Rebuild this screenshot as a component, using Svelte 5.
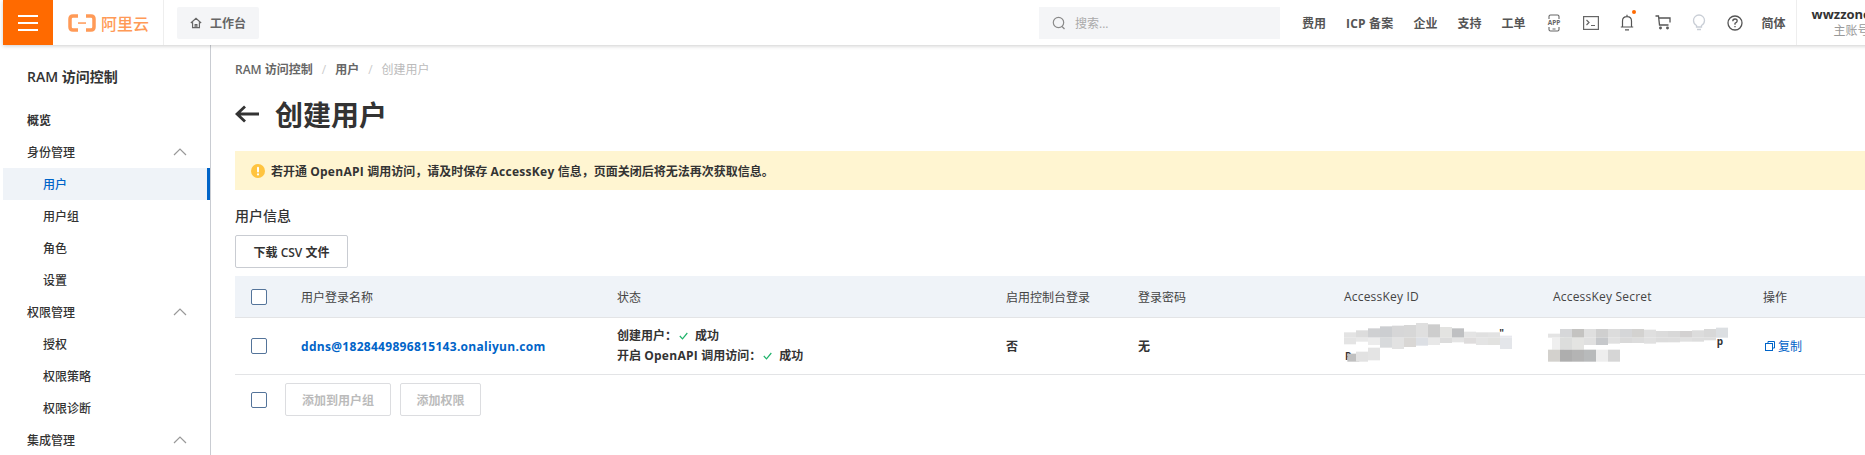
<script>
  // side menu, grouped the same way the console lists it
  const menu = [
    { label: "概览", kind: "top" },
    { label: "身份管理", kind: "group" },
    { label: "用户", kind: "sub", active: true },
    { label: "用户组", kind: "sub" },
    { label: "角色", kind: "sub" },
    { label: "设置", kind: "sub" },
    { label: "权限管理", kind: "group" },
    { label: "授权", kind: "sub" },
    { label: "权限策略", kind: "sub" },
    { label: "权限诊断", kind: "sub" },
    { label: "集成管理", kind: "group" },
  ];

  // mosaic over the secrets: [x, top, bottom, colour], blocks are 36 wide in a 3x viewBox
  const keyBlocks = [
    [42, 46, 62, "#e3e3e3"], [78, 40, 62, "#dcdcdc"], [114, 34, 62, "#cfd0d2"], [150, 28, 62, "#ccced1"],
    [186, 26, 62, "#d6d6d7"], [222, 24, 62, "#d7d7d7"], [258, 18, 62, "#dfdfdf"], [294, 22, 62, "#cdcdcd"],
    [330, 30, 62, "#e3e3e1"], [366, 34, 62, "#bfc0c2"], [402, 44, 62, "#e4e4e4"], [438, 46, 62, "#e0e0e0"],
    [474, 46, 62, "#e2e2e2"], [510, 56, 62, "#e8e8ee"],
    [42, 62, 82, "#e4e4e4"], [78, 62, 74, "#e8e8e8"], [114, 62, 84, "#ececec"], [150, 62, 92, "#d8dadc"],
    [186, 62, 96, "#e2e2e2"], [222, 62, 90, "#d9d7d5"], [258, 62, 86, "#dcdfe4"], [294, 62, 84, "#e8e8e8"],
    [330, 62, 78, "#dcdcdc"], [366, 62, 76, "#e4e4e4"], [402, 62, 80, "#dedcdc"], [438, 62, 84, "#e4e4e4"],
    [474, 62, 84, "#e2e2e0"], [510, 62, 96, "#e4e6ea"],
    [52, 110, 134, "#c0c0c0"], [78, 104, 134, "#e2e2e2"], [114, 92, 130, "#e4e4e4"],
  ];
  const secretBlocks = [
    [24, 50, 62, "#e4e4e4"], [60, 36, 62, "#d6d7d9"], [96, 36, 62, "#c4c3c1"], [132, 36, 62, "#dfdfdf"],
    [168, 36, 62, "#cfcfcf"], [204, 36, 62, "#dcdcdc"], [240, 36, 62, "#d5d6d8"], [276, 36, 62, "#d3d2d0"],
    [312, 38, 62, "#dfdfdf"], [348, 42, 62, "#dbdbdb"], [384, 42, 62, "#d8d8d8"], [420, 42, 62, "#d3d1d1"],
    [456, 40, 62, "#dcdcdc"], [492, 36, 62, "#d8d8d8"], [528, 32, 62, "#dcdfe2"],
    [36, 62, 98, "#efefef"], [60, 62, 98, "#dcdddc"], [96, 62, 98, "#e4e4e2"], [132, 62, 84, "#e0e0e0"],
    [168, 62, 84, "#c6c8cb"], [204, 62, 80, "#e0e0e0"], [240, 62, 78, "#d9d9d9"], [276, 62, 78, "#dcdcdc"],
    [312, 62, 80, "#e0e0e0"], [348, 62, 76, "#dcdcdc"], [384, 62, 76, "#dddddd"], [420, 62, 74, "#e0e0e0"],
    [456, 62, 74, "#dddddd"], [492, 62, 70, "#dddddd"],
    [24, 98, 134, "#d3d1cd"], [60, 98, 134, "#aeaeae"], [96, 98, 134, "#b4b4b4"], [132, 98, 134, "#b8babb"],
    [168, 98, 134, "#eeeeee"], [204, 98, 134, "#d6d6d6"],
  ];
</script>

<div class="page">
  <header class="topbar">
    <button class="burger" aria-label="菜单"><span></span><span></span><span></span></button>
    <div class="logo">
      <svg width="28" height="18" viewBox="0 0 28 18">
        <path d="M10 2H5Q2 2 2 5V13Q2 16 5 16H10" fill="none" stroke="#ff9a57" stroke-width="3.500" />
        <path d="M18 2H23Q26 2 26 5V13Q26 16 23 16H18" fill="none" stroke="#ff9a57" stroke-width="3.500" />
        <rect x="10" y="8.300" width="8" height="1.500" fill="#ff9a57" />
      </svg>
      <span>阿里云</span>
    </div>
    <button class="home">
      <svg width="12" height="12" viewBox="0 0 14 14" fill="none" stroke="#666" stroke-width="1.400">
        <path d="M1 7 7 1.500 13 7M3 6V12.500H11V6M6 12.500V9H8V12.500" />
      </svg>
      工作台
    </button>
    <div class="search">
      <svg width="14" height="14" viewBox="0 0 14 14" fill="none" stroke="#8a8a8a" stroke-width="1.200">
        <circle cx="6.500" cy="6.500" r="5.200" /><path d="M10 10.500 12.500 13" />
      </svg>
      <span>搜索...</span>
    </div>
    <nav class="links">
      <span>费用</span><span>ICP 备案</span><span>企业</span><span>支持</span><span>工单</span>
    </nav>
    <div class="icons">
      <svg width="16" height="18" viewBox="0 0 16 18" fill="none" stroke="#666" stroke-width="1.100">
        <path d="M3 5V2.500Q3 1 4.500 1H11.500Q13 1 13 2.500V5M3 13V15.500Q3 17 4.500 17H11.500Q13 17 13 15.500V13M6.500 15H9.500" />
        <text x="8" y="11.300" class="app">APP</text>
      </svg>
      <svg width="16" height="14" viewBox="0 0 16 14" fill="none" stroke="#666" stroke-width="1.200">
        <rect x="0.600" y="0.600" width="14.800" height="12.800" /><path d="M3.500 4 6 6.500 3.500 9M8 9.500H12" />
      </svg>
      <span class="bell">
        <svg width="14" height="17" viewBox="0 0 14 17" fill="none" stroke="#555" stroke-width="1.200">
          <path d="M2.500 12.500V7Q2.500 2.700 7 2.700 11.500 2.700 11.500 7V12.500M.8 13H13.200M7 .8V2.700M5 15.800H9" />
        </svg>
        <i></i>
      </span>
      <svg width="16" height="15" viewBox="0 0 16 15" fill="none" stroke="#555" stroke-width="1.300">
        <path d="M.5 1H3.500L4.500 10H13.500M4 3H15V7.500" /><circle cx="5.500" cy="13" r=".8" /><circle cx="12.500" cy="13" r=".8" />
      </svg>
      <svg width="14" height="17" viewBox="0 0 14 17" fill="none" stroke="#c9ced6" stroke-width="1.300">
        <path d="M4.500 11.500Q1.500 9.800 1.500 6.500A5.500 5.500 0 0 1 12.500 6.500Q12.500 9.800 9.500 11.500V13H4.500ZM5 15.500H9" />
      </svg>
      <svg width="16" height="16" viewBox="0 0 16 16" fill="none" stroke="#555" stroke-width="1.300">
        <circle cx="8" cy="8" r="7" /><path d="M5.800 6.200Q5.800 4 8 4 10.200 4 10.200 6 10.200 7.200 8 8.300V9.800M8 11V12.300" />
      </svg>
    </div>
    <span class="lang">简体</span>
    <div class="account">
      <strong>wwzzone</strong>
      <span>主账号</span>
    </div>
  </header>

  <div class="body">
    <aside class="sidebar">
      <h2>RAM 访问控制</h2>
      {#each menu as item}
        <div class="item {item.kind}" class:active={item.active}>
          <span>{item.label}</span>
          {#if item.kind === "group"}
            <svg width="14" height="8" viewBox="0 0 14 8" fill="none" stroke="#999" stroke-width="1.200"><path d="M1 7 7 1 13 7" /></svg>
          {/if}
        </div>
      {/each}
    </aside>

    <main class="content">
      <div class="crumbs">
        <span>RAM 访问控制</span><em>/</em><span>用户</span><em>/</em><span class="last">创建用户</span>
      </div>
      <h1>
        <svg width="25" height="18" viewBox="0 0 25 18" fill="none" stroke="#333" stroke-width="2.800">
          <path d="M24 9H2M10 1.500 2 9 10 16.500" />
        </svg>
        创建用户
      </h1>
      <div class="alert">
        <svg width="14" height="14" viewBox="0 0 14 14">
          <circle cx="7" cy="7" r="7" fill="#ffc440" />
          <rect x="6" y="2.800" width="2" height="5.600" rx="1" fill="#fff" />
          <circle cx="7" cy="10.400" r="1.100" fill="#fff" />
        </svg>
        <span>若开通 <b>OpenAPI</b> 调用访问，请及时保存 <b>AccessKey</b> 信息，页面关闭后将无法再次获取信息。</span>
      </div>
      <div class="section">用户信息</div>
      <button class="btn">下载 CSV 文件</button>

      <div class="table">
        <div class="row head">
          <div class="cell check"><i class="box"></i></div>
          <div class="cell name">用户登录名称</div>
          <div class="cell status">状态</div>
          <div class="cell console">启用控制台登录</div>
          <div class="cell pwd">登录密码</div>
          <div class="cell key latin">AccessKey ID</div>
          <div class="cell secret latin">AccessKey Secret</div>
          <div class="cell ops">操作</div>
        </div>
        <div class="row data">
          <div class="cell check"><i class="box"></i></div>
          <div class="cell name link">ddns@1828449896815143.onaliyun.com</div>
          <div class="cell status">
            <p>创建用户：<svg class="ok" width="9" height="8" viewBox="0 0 9 8" fill="none" stroke="#1fb36b" stroke-width="1.200"><path d="M.8 4 3.500 6.800 8.300 1" /></svg>成功</p>
            <p>开启 <b>OpenAPI</b> 调用访问：<svg class="ok" width="9" height="8" viewBox="0 0 9 8" fill="none" stroke="#1fb36b" stroke-width="1.200"><path d="M.8 4 3.500 6.800 8.300 1" /></svg>成功</p>
          </div>
          <div class="cell console">否</div>
          <div class="cell pwd">无</div>
          <div class="cell key blur">
            <svg class="mosaic m1" width="190" height="50" viewBox="0 0 570 150">
              <text x="45" y="130" class="peek">P</text>
              <text x="508" y="60" class="peek">"</text>
              {#each keyBlocks as [x, y0, y1, fill]}
                <rect {x} y={y0} width="36" height={y1 - y0} {fill} />
              {/each}
            </svg>
          </div>
          <div class="cell secret blur">
            <svg class="mosaic m2" width="190" height="50" viewBox="0 0 570 150">
              <text x="530" y="84" class="peek">p</text>
              {#each secretBlocks as [x, y0, y1, fill]}
                <rect {x} y={y0} width="36" height={y1 - y0} {fill} />
              {/each}
            </svg>
          </div>
          <div class="cell ops copy">
            <svg width="10" height="10" viewBox="0 0 10 10" fill="none" stroke="#0064c8"><rect x=".5" y="2.500" width="7" height="7" /><path d="M3 2.500V.5H9.500V7H7.500" /></svg>
            复制
          </div>
        </div>
      </div>

      <div class="actions">
        <i class="box"></i>
        <button class="btn off">添加到用户组</button>
        <button class="btn off">添加权限</button>
      </div>
    </main>
  </div>
</div>

<style>
  :global(body) {
    margin: 0;
    background: #fff;
  }
  .page {
    width: 1865px;
    height: 455px;
    overflow: hidden;
    font-family: "Open Sans", "Noto Sans CJK SC", sans-serif;
    font-size: 12px;
    color: #333;
    padding-left: 3px;
    box-sizing: border-box;
  }
  .topbar {
    position: relative;
    z-index: 1;
    display: flex;
    align-items: center;
    height: 45px;
    width: 1880px;
    box-shadow: 0 1px 4px rgba(0, 0, 0, 0.2);
    background: #fff;
  }
  .burger {
    width: 50px;
    height: 45px;
    padding: 0 15px;
    border: 0;
    background: #ff6a00;
    display: flex;
    flex-direction: column;
    justify-content: center;
    gap: 5px;
  }
  .burger span {
    display: block;
    height: 2px;
    background: #fff;
  }
  .logo {
    width: 111px;
    height: 45px;
    box-sizing: border-box;
    padding-left: 15px;
    display: flex;
    align-items: center;
    gap: 5px;
    border-right: 1px solid #eee;
    color: #ff9a57;
    font-size: 16px;
    font-weight: 500;
    white-space: nowrap;
  }
  .home {
    margin-left: 13px;
    width: 82px;
    height: 32px;
    border: 0;
    border-radius: 2px;
    background: #f4f5f7;
    color: #666;
    font: inherit;
    font-weight: 600;
    display: flex;
    align-items: center;
    justify-content: center;
    gap: 8px;
  }
  .search {
    margin-left: 780px;
    width: 241px;
    height: 32px;
    box-sizing: border-box;
    padding-left: 13px;
    background: #f4f5f7;
    color: #aaa;
    display: flex;
    align-items: center;
    gap: 9px;
  }
  .links {
    display: flex;
    gap: 20px;
    margin-left: 22px;
    color: #555;
    font-weight: 600;
    white-space: nowrap;
  }
  .links span:nth-child(2) {
    font-weight: 700;
    letter-spacing: 0.2px;
  }
  .icons {
    display: flex;
    align-items: center;
    gap: 21px;
    margin-left: 20px;
  }
  .app {
    font-size: 6.500px;
    font-weight: 700;
    text-anchor: middle;
    fill: #666;
    stroke: none;
  }
  .bell {
    position: relative;
    display: flex;
  }
  .bell i {
    position: absolute;
    top: -4px;
    right: -2px;
    width: 4px;
    height: 4px;
    border-radius: 50%;
    background: #ff6a00;
  }
  .lang {
    margin-left: 19px;
    color: #555;
    font-weight: 600;
    white-space: nowrap;
  }
  .account {
    margin-left: 10px;
    height: 45px;
    padding-left: 15px;
    border-left: 1px solid #eee;
    display: flex;
    flex-direction: column;
    justify-content: center;
    align-items: flex-start;
    gap: 1px;
    white-space: nowrap;
  }
  .account strong {
    font-size: 13px;
    line-height: 16px;
    color: #333;
  }
  .account span {
    margin-left: 22px;
    color: #999;
    line-height: 16px;
  }
  .body {
    display: flex;
    height: 410px;
  }
  .sidebar {
    width: 208px;
    flex: none;
    box-sizing: border-box;
    border-right: 1px solid #c9ccd2;
    padding-top: 17px;
  }
  .sidebar h2 {
    margin: 0 0 12px;
    height: 30px;
    line-height: 30px;
    padding-left: 24px;
    font-size: 14px;
    font-weight: 600;
  }
  .item {
    height: 32px;
    display: flex;
    align-items: center;
    justify-content: space-between;
    box-sizing: border-box;
    padding: 0 23px 0 24px;
    font-weight: 500;
  }
  .item.sub {
    padding-left: 40px;
  }
  .item.top {
    font-weight: 600;
  }
  .item.active {
    background: #eff3f8;
    color: #0064c8;
    border-right: 3px solid #0064c8;
  }
  .content {
    flex: none;
    width: 1700px;
    padding-left: 24px;
    box-sizing: border-box;
  }
  .crumbs {
    display: flex;
    gap: 9px;
    padding-top: 16px;
    height: 18px;
    line-height: 18px;
    color: #666;
    font-weight: 600;
  }
  .crumbs em {
    color: #ccc;
    font-style: normal;
    font-weight: 400;
  }
  .crumbs .last {
    color: #bbb;
    font-weight: 400;
  }
  h1 {
    margin: 13px 0 0;
    height: 44px;
    display: flex;
    align-items: center;
    gap: 15px;
    font-size: 28px;
    font-weight: 700;
  }
  .alert {
    margin-top: 15px;
    height: 39px;
    display: flex;
    align-items: center;
    gap: 6px;
    padding-left: 16px;
    background: #fff5d1;
    font-weight: 600;
    white-space: nowrap;
  }
  b {
    font-weight: 700;
    letter-spacing: 0.3px;
  }
  .section {
    margin-top: 16px;
    height: 20px;
    line-height: 20px;
    font-size: 14px;
    font-weight: 500;
  }
  .btn {
    display: block;
    margin-top: 9px;
    width: 113px;
    height: 33px;
    padding: 0;
    border: 1px solid #c9ccd2;
    border-radius: 2px;
    background: #fff;
    color: #333;
    font: inherit;
    font-weight: 600;
  }
  .table {
    margin-top: 8px;
  }
  .row {
    display: flex;
    align-items: center;
    border-bottom: 1px solid #e3e4e6;
  }
  .head {
    height: 42px;
    box-sizing: border-box;
    background: #eff3f8;
    color: #444;
  }
  .data {
    height: 57px;
    box-sizing: border-box;
    font-weight: 600;
  }
  .cell {
    flex: none;
    box-sizing: border-box;
  }
  .check {
    width: 66px;
    padding-left: 16px;
    display: flex;
  }
  .box {
    display: block;
    width: 16px;
    height: 16px;
    box-sizing: border-box;
    border: 1px solid #54749a;
    border-radius: 2px;
    background: #fff;
  }
  .name {
    width: 316px;
  }
  .link {
    color: #0064c8;
    font-weight: 700;
    letter-spacing: 0.3px;
  }
  .status {
    width: 389px;
  }
  .status p {
    margin: 0;
    line-height: 20px;
  }
  .ok {
    margin: 0 7px 0 2px;
  }
  .console {
    width: 132px;
  }
  .pwd {
    width: 206px;
  }
  .key {
    width: 209px;
  }
  .secret {
    width: 210px;
  }
  .latin {
    letter-spacing: 0.2px;
  }
  .ops {
    width: 80px;
  }
  .copy {
    color: #0064c8;
    font-weight: 400;
    display: flex;
    align-items: center;
    gap: 3px;
    padding-left: 2px;
  }
  .blur {
    position: relative;
    align-self: stretch;
  }
  .mosaic {
    position: absolute;
    top: -1px;
  }
  .m1 {
    left: -14px;
  }
  .m2 {
    left: -13px;
  }
  .peek {
    font-size: 30px;
    font-weight: 700;
    fill: #333;
  }
  .actions {
    margin-top: 8px;
    display: flex;
    align-items: center;
    gap: 9px;
    padding-left: 16px;
  }
  .actions .box {
    margin-right: 9px;
  }
  .btn.off {
    margin: 0;
    width: 106px;
    height: 33px;
    color: #bbb;
    border-color: #dcdde0;
  }
  .btn.off:last-child {
    width: 81px;
  }
</style>
